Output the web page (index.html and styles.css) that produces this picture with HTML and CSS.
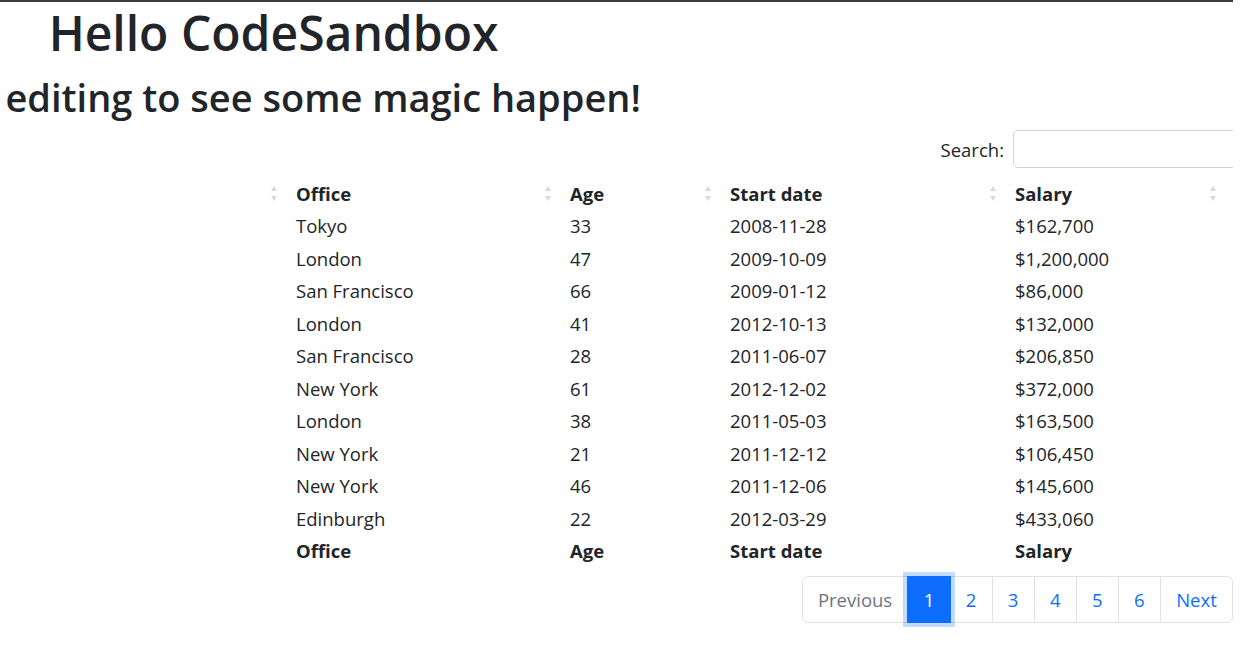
FILE: index.html
```html
<!DOCTYPE html>
<html lang="en">
<head>
<meta charset="utf-8">
<title>Hello CodeSandbox</title>
<link rel="stylesheet" href="styles.css">
</head>
<body>
<div class="page">
  <header class="intro">
    <h1 class="title">Hello CodeSandbox</h1>
    <h2 class="subtitle">Start editing to see some magic happen!</h2>
  </header>

  <div class="filter">
    <label class="filter-label">Search:<input class="filter-input" type="search"></label>
  </div>

  <table class="data">
    <colgroup>
      <col class="c-name"><col class="c-office"><col class="c-age"><col class="c-start"><col class="c-salary">
    </colgroup>
    <thead>
      <tr>
        <th><div class="th-in"><span></span><span class="sort"><i class="up"></i><i class="down"></i></span></div></th>
        <th><div class="th-in"><span>Office</span><span class="sort"><i class="up"></i><i class="down"></i></span></div></th>
        <th><div class="th-in"><span>Age</span><span class="sort"><i class="up"></i><i class="down"></i></span></div></th>
        <th><div class="th-in"><span>Start date</span><span class="sort"><i class="up"></i><i class="down"></i></span></div></th>
        <th><div class="th-in"><span>Salary</span><span class="sort"><i class="up"></i><i class="down"></i></span></div></th>
      </tr>
    </thead>
    <tbody>
      <tr><td></td><td>Tokyo</td><td>33</td><td>2008-11-28</td><td>$162,700</td></tr>
      <tr><td></td><td>London</td><td>47</td><td>2009-10-09</td><td>$1,200,000</td></tr>
      <tr><td></td><td>San Francisco</td><td>66</td><td>2009-01-12</td><td>$86,000</td></tr>
      <tr><td></td><td>London</td><td>41</td><td>2012-10-13</td><td>$132,000</td></tr>
      <tr><td></td><td>San Francisco</td><td>28</td><td>2011-06-07</td><td>$206,850</td></tr>
      <tr><td></td><td>New York</td><td>61</td><td>2012-12-02</td><td>$372,000</td></tr>
      <tr><td></td><td>London</td><td>38</td><td>2011-05-03</td><td>$163,500</td></tr>
      <tr><td></td><td>New York</td><td>21</td><td>2011-12-12</td><td>$106,450</td></tr>
      <tr><td></td><td>New York</td><td>46</td><td>2011-12-06</td><td>$145,600</td></tr>
      <tr><td></td><td>Edinburgh</td><td>22</td><td>2012-03-29</td><td>$433,060</td></tr>
    </tbody>
    <tfoot>
      <tr><th></th><th>Office</th><th>Age</th><th>Start date</th><th>Salary</th></tr>
    </tfoot>
  </table>

  <nav class="pager">
    <ul class="pagination">
      <li class="page-item disabled"><span class="page-link">Previous</span></li>
      <li class="page-item active"><span class="page-link">1</span></li>
      <li class="page-item"><span class="page-link">2</span></li>
      <li class="page-item"><span class="page-link">3</span></li>
      <li class="page-item"><span class="page-link">4</span></li>
      <li class="page-item"><span class="page-link">5</span></li>
      <li class="page-item"><span class="page-link">6</span></li>
      <li class="page-item"><span class="page-link">Next</span></li>
    </ul>
  </nav>
</div>
</body>
</html>
```

FILE: styles.css
```css
* { box-sizing: border-box; }

html, body {
  margin: 0;
  padding: 0;
  background: #fff;
}

body {
  font-family: "Open Sans", "Noto Sans", sans-serif;
  color: #212529;
  font-size: 18.5px;
}

.page {
  width: 1233px;
  border-top: 2px solid #3b3b3b;
  overflow: hidden;
  padding-bottom: 20px;
}

.intro {
  width: 547px;
  display: flex;
  flex-direction: column;
  align-items: center;
}

.title {
  margin: 2px 0 0;
  font-size: 48px;
  font-weight: 600;
  line-height: 58px;
  white-space: nowrap;
}

.subtitle {
  margin: 12px 0 0;
  font-size: 38px;
  font-weight: 600;
  line-height: 46px;
  white-space: nowrap;
}

.filter {
  display: flex;
  justify-content: flex-end;
  margin-top: 10px;
}

.filter-label {
  display: flex;
  align-items: center;
  font-size: 18.5px;
  margin-right: -4px;
}

.filter-input {
  margin-left: 9px;
  width: 224px;
  height: 38px;
  border: 1px solid #ced4da;
  border-radius: 5px;
  background: #fff;
  font: inherit;
}

.data {
  border-collapse: collapse;
  table-layout: fixed;
  width: 1227px;
  margin-top: 9px;
}

.c-name { width: 288px; }
.c-office { width: 274px; }
.c-age { width: 160px; }
.c-start { width: 285px; }
.c-salary { width: 220px; }

.data th,
.data td {
  height: 32.5px;
  padding: 0 8px;
  text-align: left;
  vertical-align: middle;
  white-space: nowrap;
  font-size: 18.5px;
}

.data th { font-weight: 700; }

.th-in {
  display: flex;
  align-items: center;
  justify-content: space-between;
}

.sort {
  display: flex;
  flex-direction: column;
  gap: 5px;
  margin-right: 3px;
}

.sort i {
  display: block;
  width: 0;
  height: 0;
  border-left: 3px solid transparent;
  border-right: 3px solid transparent;
}

.sort .up { border-bottom: 5px solid #d9d9d9; }
.sort .down { border-top: 5px solid #d9d9d9; }

.pager {
  display: flex;
  justify-content: flex-end;
  margin-top: 9px;
}

.pagination {
  display: flex;
  list-style: none;
  margin: 0;
  padding: 0;
}

.page-link {
  display: block;
  padding: 9px 15.25px;
  line-height: 27px;
  font-size: 18.5px;
  color: #0d6efd;
  background: #fff;
  border: 1px solid #dee2e6;
  margin-left: -1px;
}

.page-item:first-child .page-link {
  margin-left: 0;
  border-top-left-radius: 6px;
  border-bottom-left-radius: 6px;
}

.page-item:last-child .page-link {
  border-top-right-radius: 6px;
  border-bottom-right-radius: 6px;
}

.page-item.disabled .page-link { color: #6c757d; }

.page-item.active .page-link {
  position: relative;
  z-index: 2;
  color: #fff;
  background: #0d6efd;
  border-color: #0d6efd;
  box-shadow: 0 0 0 4px rgba(13, 110, 253, 0.25);
}
```
